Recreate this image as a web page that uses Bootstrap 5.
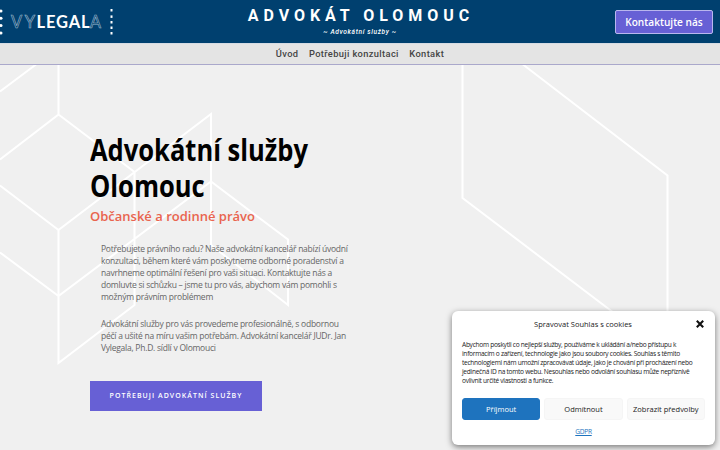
<!DOCTYPE html>
<html lang="cs">
<head>
  <meta charset="UTF-8">
  <meta name="viewport" content="width=device-width, initial-scale=1">
  <title>Advokát Olomouc</title>
  <link href="https://cdn.jsdelivr.net/npm/bootstrap@5.3.2/dist/css/bootstrap.min.css" rel="stylesheet">
  <style>
    body { background-color: #f0f0f0; font-family: "Open Sans", sans-serif; height: 450px; overflow: hidden; }
    .topbar { background-color: #00406f; height: 43px; }
    .topbar > div { flex: 1 1 0; }
    .topbar > .site-title { flex: 0 0 auto; }
    .brand-text { font-family: Lato, sans-serif; font-size: 16.5px; }
    .site-title { font-family: Roboto, sans-serif; color: #fff; }
    .site-title h1 { font-size: 16px; font-weight: 700; letter-spacing: 4.95px; line-height: 20px; margin: 6px -3px 0 -1px; }
    .site-title p { font-size: 6.6px; font-weight: 500; font-style: italic; letter-spacing: .65px; line-height: 10px; margin: 1px 0 0; }
    .btn-contact { background-color: #6760d5; border: 1px solid #b9b6ee; border-radius: 2px; color: #fff; font-size: 10.1px; font-weight: 600; line-height: 14px; padding: 4px 9px 5px; width: 98px; height: 24px; margin-right: 7px; white-space: nowrap; }
    .menu-bar { background-color: #e4e4e4; border-top: 1px solid #d5dbe3; border-bottom: 1px solid #aaa8cb; height: 22px; gap: 10.5px; font-family: Roboto, sans-serif; }
    .menu-bar .nav-link { color: #444; font-size: 9.3px; font-weight: 500; letter-spacing: .36px; padding: 0; line-height: 19px; }
    .hero { height: 385px; padding: 67px 0 0 90px; }
    .hero-lines { position: absolute; left: 0; top: 0; z-index: -1; }
    .hero h2 { color: #000; font-size: 29.5px; font-weight: 700; line-height: 36px; margin: 0; white-space: nowrap; transform: scaleX(.865); transform-origin: left; }
    .hero h3 { color: #e9644e; font-size: 13px; font-weight: 600; line-height: 20px; margin: 2px 0 17px; }
    .hero-copy { color: #666; font-size: 8.5px; letter-spacing: -.25px; line-height: 11.9px; margin-left: 11px; white-space: nowrap; }
    .hero-copy p { margin-bottom: 15.5px; }
    .btn-hero { background-color: #6760d5; border-radius: 0; border: 0; color: #fff; font-size: 7px; font-weight: 600; letter-spacing: 1.04px; width: 172px; height: 30px; padding: 0; margin-top: 27px; }
    .cookie-box { position: absolute; left: 452px; top: 311px; width: 263px; height: 134px; background-color: #fff; border-radius: 6px; box-shadow: 0 2px 6px rgba(0,0,0,.5); padding: 7px 10px; color: #222; }
    .cookie-title { font-size: 7.5px; line-height: 12px; }
    .cookie-text { font-size: 6.6px; letter-spacing: -.29px; line-height: 9px; margin: 10px 0 13px; white-space: nowrap; }
    .cookie-box .btn { background-color: #f9f9f9; border: 1px solid #f5f5f5; border-radius: 3px; color: #222; flex: 1 1 0; font-size: 7.5px; height: 22px; line-height: 20px; padding: 0; white-space: nowrap; }
    .cookie-box .btn-accept { background-color: #1e73be; border-color: #1e73be; color: #fff; }
    .cookie-link { color: #1e73be; font-size: 6.6px; letter-spacing: -.3px; line-height: 9px; margin-top: 7px; }
  </style>
</head>
<body>

  <header class="topbar d-flex">
    <div>
      <svg class="d-block" width="116" height="43">
        <g fill="#fff">
          <circle cx="1" cy="11" r="1.5"/><circle cx="1" cy="18.3" r="1.5"/><circle cx="1" cy="25.6" r="1.5"/><circle cx="1" cy="33" r="1.5"/>
          <rect x="110.5" y="9" width="2" height="2.5"/><rect x="110.5" y="15.4" width="2" height="2.5"/><rect x="110.5" y="21" width="2" height="2.5"/><rect x="110.5" y="26.5" width="2" height="2.5"/><rect x="110.5" y="32" width="2" height="2.5"/>
        </g>
        <g class="brand-text">
          <text x="11" y="28" textLength="24" fill="none" stroke="#9fb9cd" stroke-width=".6">VY</text>
          <text x="36.5" y="28" textLength="53" fill="#fff" font-weight="700">LEGAL</text>
          <text x="90" y="28" textLength="11" fill="none" stroke="#9fb9cd" stroke-width=".6" lengthAdjust="spacingAndGlyphs">A</text>
        </g>
      </svg>
    </div>
    <div class="site-title text-center">
      <h1>ADVOKÁT OLOMOUC</h1>
      <p>~ Advokátní služby ~</p>
    </div>
    <div class="d-flex justify-content-end align-items-center">
      <a href="#" class="btn btn-contact">Kontaktujte nás</a>
    </div>
  </header>

  <nav class="menu-bar nav justify-content-center">
    <a class="nav-link" href="#">Úvod</a>
    <a class="nav-link" href="#">Potřebuji konzultaci</a>
    <a class="nav-link" href="#">Kontakt</a>
  </nav>

  <main class="hero">
    <!-- geometric backdrop -->
    <svg class="hero-lines" width="720" height="450" fill="none" stroke="#fff" stroke-width="2">
      <path d="M0 91.5L38 63M58.5 64V114.5L0 159.5M58.5 114.5L134.5 172V305L58.5 363V230L211 114V245L288 305V239.5L211 181.5L58.5 296L0 252.5M0 185.5L58.5 230"/>
      <path d="M462.5 64V198L614 313M521 63L667.5 175.5V315"/>
    </svg>
    <h2>Advokátní služby<br>Olomouc</h2>
    <h3>Občanské a rodinné právo</h3>
    <div class="hero-copy">
      <p>Potřebujete právního radu? Naše advokátní kancelář nabízí úvodní<br>konzultaci, během které vám poskytneme odborné poradenství a<br>navrhneme optimální řešení pro vaši situaci. Kontaktujte nás a<br>domluvte si schůzku – jsme tu pro vás, abychom vám pomohli s<br>možným právním problémem</p>
      <p>Advokátní služby pro vás provedeme profesionálně, s odbornou<br>péčí a ušité na míru vašim potřebám. Advokátní kancelář JUDr. Jan<br>Vylegala, Ph.D. sídlí v Olomouci</p>
    </div>
    <a href="#" class="btn btn-hero d-flex align-items-center justify-content-center">POTŘEBUJI ADVOKÁTNÍ SLUŽBY</a>
  </main>

  <div class="cookie-box">
    <div class="d-flex align-items-center">
      <div class="cookie-title flex-grow-1 text-center ps-2">Spravovat Souhlas s cookies</div>
      <svg width="9" height="8" viewBox="0 0 9 8" stroke="#111" stroke-width="2.1"><path d="M.8.8L7.2 7.2M7.2.8L.8 7.2"/></svg>
    </div>
    <p class="cookie-text">Abychom poskytli co nejlepší služby, používáme k ukládání a/nebo přístupu k<br>informacím o zařízení, technologie jako jsou soubory cookies. Souhlas s těmito<br>technologiemi nám umožní zpracovávat údaje, jako je chování při procházení nebo<br>jedinečná ID na tomto webu. Nesouhlas nebo odvolání souhlasu může nepříznivě<br>ovlivnit určité vlastnosti a funkce.</p>
    <div class="d-flex gap-1">
      <button type="button" class="btn btn-accept">Příjmout</button>
      <button type="button" class="btn">Odmítnout</button>
      <button type="button" class="btn">Zobrazit předvolby</button>
    </div>
    <div class="cookie-link text-center"><a href="#" class="text-reset">GDPR</a></div>
  </div>

  <script src="https://cdn.jsdelivr.net/npm/bootstrap@5.3.2/dist/js/bootstrap.bundle.min.js"></script>
</body>
</html>
